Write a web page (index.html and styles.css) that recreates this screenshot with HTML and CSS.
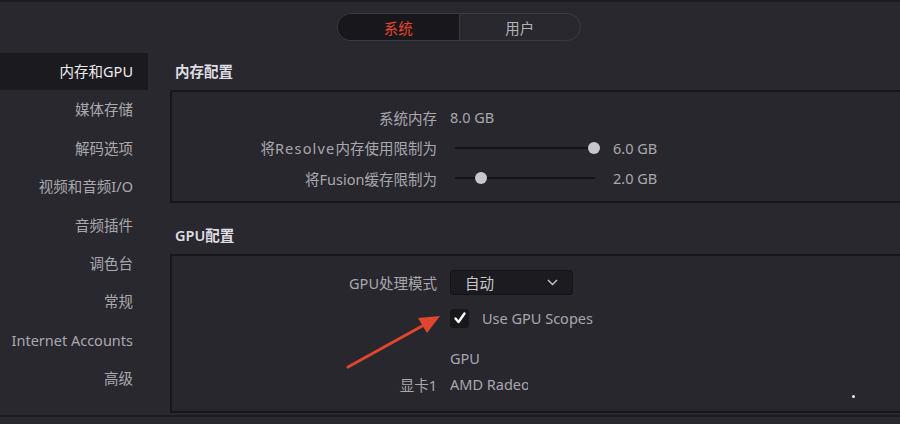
FILE: index.html
```html
<!DOCTYPE html>
<html>
	<head>
		<meta charset="UTF-8">
		<title>偏好设置</title>
		<link rel="stylesheet" href="styles.css">
	</head>
	<body>
		<div id="page">
			<div class="top_bar">
				<div class="seg">
					<div class="seg_item seg_on">系统</div>
					<div class="seg_item">用户</div>
				</div>
			</div>
			<div class="main">
				<div class="side">
					<div class="side_item side_on">内存和GPU</div>
					<div class="side_item">媒体存储</div>
					<div class="side_item">解码选项</div>
					<div class="side_item">视频和音频I/O</div>
					<div class="side_item">音频插件</div>
					<div class="side_item">调色台</div>
					<div class="side_item">常规</div>
					<div class="side_item">Internet Accounts</div>
					<div class="side_item">高级</div>
				</div>
				<div class="content">
					<div class="sec_title">内存配置</div>
					<div class="panel panel_mem">
						<div class="row">
							<div class="label">系统内存</div>
							<div class="value">8.0 GB</div>
						</div>
						<div class="row">
							<div class="label">将<span class="wide">Resolve</span>内存使用限制为</div>
							<div class="value">
								<div class="slider"><div class="track"></div><div class="thumb" style="left: 139px"></div></div>
								<span>6.0 GB</span>
							</div>
						</div>
						<div class="row">
							<div class="label">将Fusion缓存限制为</div>
							<div class="value">
								<div class="slider"><div class="track"></div><div class="thumb" style="left: 26px"></div></div>
								<span>2.0 GB</span>
							</div>
						</div>
					</div>

					<div class="sec_title sec_gap">GPU配置</div>
					<div class="panel panel_gpu">
						<div class="row row_drop">
							<div class="label">GPU处理模式</div>
							<div class="value">
								<div class="dropdown">
									<span>自动</span>
									<svg width="11" height="7" viewBox="0 0 11 7"><path d="M1 1 L5.5 5.5 L10 1" fill="none" stroke="#c9c8cd" stroke-width="1.4"/></svg>
								</div>
							</div>
						</div>
						<div class="row row_check">
							<div class="label"></div>
							<div class="value">
								<div class="checkbox">
									<svg width="14" height="14" viewBox="0 0 14 14"><path d="M2.5 7.5 L5.5 11 L11.5 2.5" fill="none" stroke="#ffffff" stroke-width="2.4" stroke-linecap="round" stroke-linejoin="round"/></svg>
								</div>
								<span>Use GPU Scopes</span>
							</div>
						</div>
						<div class="row row_gpu">
							<div class="label"></div>
							<div class="value">GPU</div>
						</div>
						<div class="row">
							<div class="label">显卡1</div>
							<div class="value"><span class="clip">AMD Radeon</span></div>
						</div>
					</div>
				</div>
			</div>
			<div class="bottom_bar"></div>

			<!-- 红色箭头标注 -->
			<svg class="arrow" width="110" height="70" viewBox="0 0 110 70">
				<line x1="4" y1="61" x2="80" y2="19" stroke="#e0462e" stroke-width="3" stroke-linecap="round"/>
				<polygon points="96,10 74,12 83,27" fill="#e0462e"/>
			</svg>
			<div class="dot"></div>
		</div>
	</body>
</html>
```

FILE: styles.css
```css
*{margin: 0;padding: 0;box-sizing: border-box;}
html,body{
	width: 900px;
	height: 424px;
	overflow: hidden;
	background: #29282f;
}
#page{
	position: relative;
	width: 900px;
	height: 424px;
	font-family: "Noto Sans", "Noto Sans CJK SC", sans-serif;
	font-size: 14.5px;
	color: #a8a7ad;
	border-top: 2px solid #1c1b21;
}
.top_bar{
	height: 51px;
	padding-top: 11px;
	padding-left: 337px;
}
.seg{
	display: flex;
	width: 244px;
	height: 28px;
	border: 1px solid #3b3a41;
	border-radius: 14px;
	overflow: hidden;
}
.seg_item{
	flex: 1;
	display: flex;
	align-items: center;
	justify-content: center;
	color: #b4b3b8;
}
.seg_on{
	background: #18171c;
	color: #e5432d;
	border-right: 1px solid #3b3a41;
}
.main{
	display: flex;
	gap: 22px;
}
.side{
	width: 148px;
	flex-shrink: 0;
}
.side_item{
	height: 38.4px;
	line-height: 37px;
	text-align: right;
	padding-right: 15px;
	color: #a9a8ae;
	white-space: nowrap;
}
.side_on{
	background: #1b1a1f;
	color: #ececee;
	height: 37px;
	margin-bottom: 1.4px;
	line-height: 36px;
}
.content{
	width: 760px;
	flex-shrink: 0;
}
.sec_title{
	height: 37px;
	line-height: 36px;
	padding-left: 5px;
	color: #dedde1;
	font-weight: 600;
}
.sec_gap{
	margin-top: 14px;
}
.panel{
	border: 2px solid #17161b;
	background: #28272e;
}
.panel_mem{
	height: 113px;
	padding-top: 10px;
}
.panel_gpu{
	height: 159px;
	padding-top: 14px;
}
.row{
	display: grid;
	grid-template-columns: 265px 1fr;
	column-gap: 13px;
	height: 30.5px;
	align-items: center;
}
.label{
	text-align: right;
	white-space: nowrap;
}
.wide{
	letter-spacing: 1.2px;
}
.value{
	display: flex;
	align-items: center;
	gap: 13px;
	white-space: nowrap;
}
.slider{
	position: relative;
	width: 150px;
	height: 12px;
}
.track{
	position: absolute;
	left: 5px;
	right: 5px;
	top: 5px;
	height: 2px;
	background: #141318;
}
.thumb{
	position: absolute;
	top: 0;
	width: 12px;
	height: 12px;
	margin-left: -1px;
	border-radius: 50%;
	background: #c8c7cc;
}
.row_drop{
	height: 25px;
}
.dropdown{
	width: 123px;
	height: 25px;
	background: #1c1b20;
	border: 1px solid #141318;
	border-radius: 3px;
	display: flex;
	align-items: center;
	justify-content: space-between;
	padding: 0 14px 0 14px;
	color: #c9c8cd;
}
.row_check{
	height: 26px;
	margin-top: 10px;
}
.checkbox{
	width: 19px;
	height: 19px;
	background: #18171c;
	border-radius: 3px;
	display: flex;
	align-items: center;
	justify-content: center;
}
.row_gpu{
	height: 26px;
	margin-top: 14px;
}
.row_gpu + .row{
	height: 26px;
}
.clip{
	display: inline-block;
	width: 78px;
	overflow: hidden;
}
.bottom_bar{
	position: absolute;
	left: 0;
	right: 0;
	bottom: 0;
	height: 9px;
	background: #2a2930;
	border-top: 2px solid #1c1b21;
}
.arrow{
	position: absolute;
	left: 344px;
	top: 304px;
}
.dot{
	position: absolute;
	left: 852px;
	top: 393px;
	width: 3px;
	height: 3px;
	background: #e8e8ea;
	border-radius: 50%;
}
```
